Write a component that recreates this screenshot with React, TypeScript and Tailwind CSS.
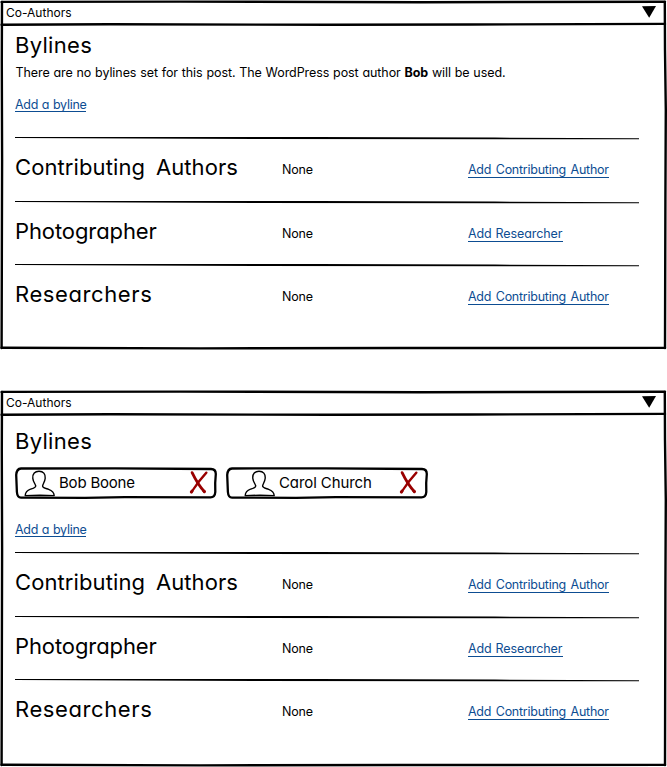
import type { ReactNode } from "react";

function Frame({ h }: { h: number }) {
  return (
    <svg className="pointer-events-none absolute inset-0" width="667" height={h} viewBox={`0 0 667 ${h}`} fill="none" stroke="#000" strokeWidth="2.4" strokeLinecap="round">
      <path d="M1.6 1.9 L180 1.6 L420 2.2 L665 1.7" />
      <path d="M1.6 24.8 L110 24.2 L330 24.8 L470 24.5 L665 23.9" />
      <path d={`M2 2 L1.8 60 L2.1 160 L1.6 ${h - 2}`} />
      <path d={`M664.8 2 L665 50 L665.8 110 L665.4 200 L665 ${h - 2}`} />
      <path d={`M1.6 ${h - 2.2} L200 ${h - 1.6} L400 ${h - 2} L665 ${h - 2.1}`} />
    </svg>
  );
}

function Divider() {
  return (
    <svg className="block h-[4px] w-[624px]" viewBox="0 0 624 4" fill="#000">
      <path d="M0 1 L90 1 L300 1.1 L480 1.6 L624 2.3 L624 3.3 L500 3.2 L240 3 L60 2.3 L0 1.9 Z" />
    </svg>
  );
}

function Person() {
  return (
    <svg className="h-[27px] w-[32px] shrink-0" viewBox="0 0 32 27" fill="none" stroke="#000" strokeWidth="1.4" strokeLinejoin="round">
      <path d="M1.2 25.6 C1.4 21.8 3 20.4 6.5 19.2 C9.5 18.2 12 17.6 11.7 15.8 C11.2 13.9 9.2 11.8 8.8 8.3 C8.4 3.8 11 1.2 15 1.2 C19.4 1.2 21.5 4 21.2 8.2 C20.9 12 18.8 13.8 18.6 16 C18.5 17.9 21.6 18.3 24.6 19.3 C28.4 20.6 30 22 30.2 25.6 L16 25.2 Z" />
    </svg>
  );
}

function Cross() {
  return (
    <svg className="h-[24px] w-[20px] shrink-0" viewBox="0 0 20 24" fill="none" stroke="#990000" strokeLinecap="round" strokeLinejoin="round">
      <path d="M3.1 2.6 C6.2 9 10.2 16 15.2 21.4" strokeWidth="2.8" />
      <path d="M17.4 2.6 C12 8.4 7 15 2.5 22" strokeWidth="2.3" />
      <path d="M3 21.2 L2.4 22 M14.8 21 L15.4 21.6" strokeWidth="3" />
    </svg>
  );
}

function Chip({ name, icon, spacing }: { name: string; icon: string; spacing: string }) {
  return (
    <div className="relative h-[32px] w-[202px]">
      <svg className="absolute inset-0" width="202" height="32" viewBox="0 0 202 32" fill="none" stroke="#000" strokeWidth="2.3" strokeLinejoin="round">
        <path d="M6 1.5 L100 1.3 L196 2 Q200.8 2 200.8 7 L200.2 16 L200.3 25 Q200 30.3 195.5 30.4 L110 30.2 L70 30.8 L6 30.6 Q2.3 30.6 1.9 25 L1.2 8 Q1.6 1.8 6 1.5 Z" />
      </svg>
      <div className={`flex h-[32px] items-start pt-[3px] ${icon}`}>
        <Person />
        <span className={`ml-[3px] flex-1 whitespace-nowrap pt-[1px] text-[15px] leading-6 ${spacing}`}>{name}</span>
        <Cross />
      </div>
    </div>
  );
}

function Link({ children, className }: { children: ReactNode; className: string }) {
  return (
    <a className={`inline-block whitespace-nowrap border-b border-[#0d4d92] text-[12.5px] leading-[18px] text-[#0d4d92] ${className}`}>{children}</a>
  );
}

function Row({ title, link, titleClass, linkClass, height }: { title: string; link: string; titleClass: string; linkClass: string; height: string }) {
  return (
    <div className={height}>
      <Divider />
      <div className="flex pt-[11px]">
        <h2 className={`w-[267px] whitespace-nowrap text-[22px] leading-[32px] ${titleClass}`}>{title}</h2>
        <span className="w-[186px] pt-[10px] text-[12.5px] leading-[18px] tracking-[-0.2px]">None</span>
        <div className="pt-[9px] leading-none">
          <Link className={linkClass}>{link}</Link>
        </div>
      </div>
    </div>
  );
}

function Panel({ h, className, titleClass, children }: { h: number; className: string; titleClass: string; children: ReactNode }) {
  return (
    <section className={`relative w-[667px] ${className}`}>
      <Frame h={h} />
      <header className="flex h-[25px] items-start justify-between pl-[6px] pr-[11px]">
        <span className="pt-[4px] text-[12px] leading-[18px]">Co-Authors</span>
        <svg className="mt-[6px] h-[12px] w-[14px]" viewBox="0 0 14 12">
          <path d="M0 0.2 L14 0 L7.2 11.8 Z" fill="#000" />
        </svg>
      </header>
      <div className="pl-[15px]">
        <h1 className={`text-[22px] leading-[32px] tracking-[0.3px] ${titleClass}`}>Bylines</h1>
        {children}
      </div>
    </section>
  );
}

function Rows() {
  return (
    <>
      <Row height="h-[64px]" title="Contributing Authors" link="Add Contributing Author" titleClass="tracking-[0.1px] [word-spacing:4.5px]" linkClass="h-[17px] w-[141px] tracking-[-0.25px] [word-spacing:1.3px]" />
      <Row height="h-[63px]" title="Photographer" link="Add Researcher" titleClass="tracking-[-0.1px]" linkClass="h-[17px] w-[95px] tracking-[-0.1px] [word-spacing:0.5px]" />
      <Row height="h-[84px]" title="Researchers" link="Add Contributing Author" titleClass="tracking-[0.6px]" linkClass="h-[17px] w-[141px] tracking-[-0.25px] [word-spacing:1.3px]" />
    </>
  );
}

export default function App() {
  return (
    <main className="h-[767px] w-[667px] overflow-hidden bg-white font-['Inter','Liberation_Sans',sans-serif] text-black [font-feature-settings:'cv11']">
      <Panel h={350} className="h-[350px]" titleClass="pt-[4px]">
        <p className="h-[18px] whitespace-nowrap pl-[0.5px] pt-[3px] text-[12.5px] leading-[18px] tracking-[-0.07px] [word-spacing:0.35px]">
          There are no bylines set for this post. The WordPress post author <b>Bob</b> will be used.
        </p>
        <div className="h-[57px] pt-[16px] leading-none">
          <Link className="h-[16px] w-[71px] tracking-[-0.25px] [word-spacing:0.4px]">Add a byline</Link>
        </div>
        <Rows />
      </Panel>
      <Panel h={377} className="mt-[40px] h-[377px]" titleClass="pt-[10px]">
        <div className="flex gap-[9px] pt-[10px]">
          <Chip name="Bob Boone" icon="pl-[9px] pr-[8px]" spacing="tracking-[-0.2px]" />
          <Chip name="Carol Church" icon="pl-[18px] pr-[9px]" spacing="tracking-[-0.1px]" />
        </div>
        <div className="h-[52px] pt-[21px] leading-none">
          <Link className="h-[16px] w-[71px] tracking-[-0.25px] [word-spacing:0.4px]">Add a byline</Link>
        </div>
        <Rows />
      </Panel>
    </main>
  );
}
